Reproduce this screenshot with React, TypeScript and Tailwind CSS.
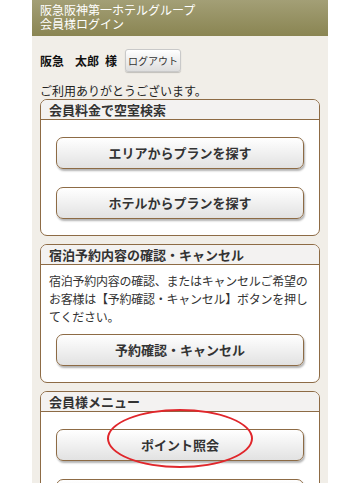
const font = { fontFamily: '"Noto Sans CJK JP", "Noto Sans", sans-serif' };

function MenuButton({ label }: { label: string }) {
  return (
    <button className="flex h-[32px] w-full items-center justify-center rounded-[7px] border-[1.5px] border-[#8d6b45] bg-gradient-to-b from-[#ffffff] to-[#e2e2e2] text-[13px] font-bold text-[#333] shadow-[1px_2px_2px_rgba(0,0,0,0.3)]">
      {label}
    </button>
  );
}

function Box({ title, children }: { title: string; children: React.ReactNode }) {
  return (
    <div className="overflow-hidden rounded-[7px] border-[1.5px] border-[#8d6b45] bg-white">
      <div className="flex h-[20px] items-center border-b border-[#8d6b45] bg-[#f3f2f1] px-[8px] text-[13px] font-bold leading-none text-[#333]">
        {title}
      </div>
      {children}
    </div>
  );
}

export default function App() {
  return (
    <div className="flex h-[483px] justify-center overflow-hidden bg-white" style={font}>
      <div className="w-[296px] bg-[#f1eee8]">
        <div className="h-[36px] bg-gradient-to-b from-[#a39f76] to-[#8a8552] px-[8px] pt-[3px] text-[12px] leading-[14px] text-white">
          <div>阪急阪神第一ホテルグループ</div>
          <div>会員様ログイン</div>
        </div>

        <div className="flex items-center px-[8px] pt-[13px] text-[12px] font-bold text-[#111]">
          <span>阪急</span>
          <span className="ml-[11px]">太郎</span>
          <span className="ml-[6px]">様</span>
          <button className="ml-[8px] flex h-[23px] w-[56px] items-center justify-center rounded-[3px] border border-[#c9c9c9] bg-gradient-to-b from-[#ffffff] to-[#dedede] text-[10px] font-normal text-[#333] shadow-[0_1px_1px_rgba(0,0,0,0.2)]">
            ログアウト
          </button>
        </div>

        <div className="px-[8px] pt-[10px] text-[12px] leading-[17px] text-[#222]">
          ご利用ありがとうございます。
        </div>

        <div className="flex flex-col gap-[8px] px-[8px]">
          <Box title="会員料金で空室検索">
            <div className="flex flex-col gap-[18px] px-[15px] pb-[16px] pt-[17px]">
              <MenuButton label="エリアからプランを探す" />
              <MenuButton label="ホテルからプランを探す" />
            </div>
          </Box>

          <Box title="宿泊予約内容の確認・キャンセル">
            <div className="pl-[8px] pr-[4px] pt-[7px] text-[12px] leading-[18px] tracking-[-0.25px] text-[#333]">
              宿泊予約内容の確認、またはキャンセルご希望のお客様は【予約確認・キャンセル】ボタンを押してください。
            </div>
            <div className="px-[15px] pb-[16px] pt-[8px]">
              <MenuButton label="予約確認・キャンセル" />
            </div>
          </Box>

          <Box title="会員様メニュー">
            <div className="flex flex-col gap-[18px] px-[15px] pb-[16px] pt-[17px]">
              <div className="relative">
                <MenuButton label="ポイント照会" />
                <div className="pointer-events-none absolute left-[51px] top-[-20px] h-[59px] w-[146px] rounded-[50%] border-2 border-[#e0262b]" />
              </div>
              <MenuButton label="会員情報の確認・変更" />
            </div>
          </Box>
        </div>
      </div>
    </div>
  );
}
